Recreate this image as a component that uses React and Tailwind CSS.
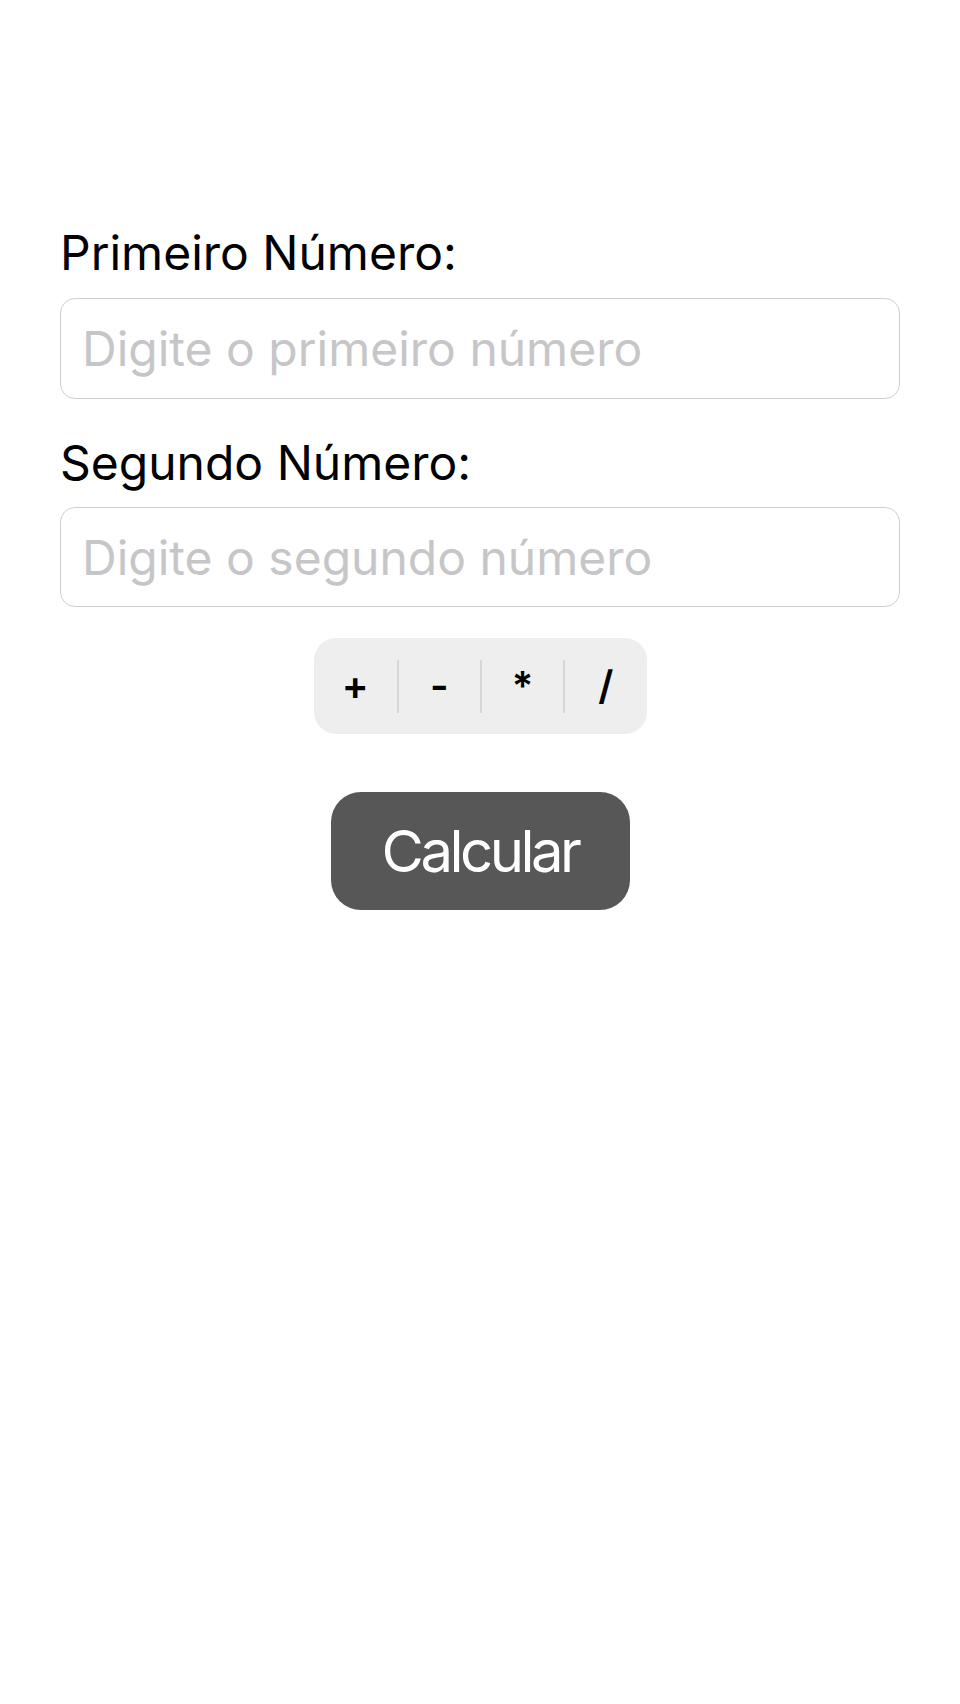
import { useState } from "react";

const ops = ["+", "-", "*", "/"];

const App = () => {
  const [first, setFirst] = useState("");
  const [second, setSecond] = useState("");
  const [op, setOp] = useState(null);
  const [result, setResult] = useState(null);

  const handleCalc = () => {
    const a = parseFloat(first);
    const b = parseFloat(second);
    if (isNaN(a) || isNaN(b) || !op) return;
    if (op === "+") setResult(a + b);
    else if (op === "-") setResult(a - b);
    else if (op === "*") setResult(a * b);
    else setResult(a / b);
  };

  return (
    <div
      className="min-h-[1704px] w-full bg-white px-[60px] pt-[224px]"
      style={{ fontFamily: "Inter, 'Liberation Sans', sans-serif" }}
    >
      <label className="block text-[48px] leading-[58px] text-black">
        Primeiro Número:
      </label>
      <input
        className="mt-[16px] block h-[101px] w-full rounded-[15px] border border-[#cfcfcf] px-[21px] text-[48px] text-black outline-none placeholder:text-[#c6c6c8]"
        type="number"
        placeholder="Digite o primeiro número"
        value={first}
        onChange={(e) => setFirst(e.target.value)}
      />

      <label className="mt-[35px] block text-[48px] leading-[58px] text-black">
        Segundo Número:
      </label>
      <input
        className="mt-[15px] block h-[100px] w-full rounded-[15px] border border-[#cfcfcf] px-[21px] text-[48px] text-black outline-none placeholder:text-[#c6c6c8]"
        type="number"
        placeholder="Digite o segundo número"
        value={second}
        onChange={(e) => setSecond(e.target.value)}
      />

      <div className="mx-auto mt-[31px] flex h-[96px] w-[333px] items-center rounded-[22px] bg-[#eeeeef]">
        {ops.map((o, i) => (
          <div key={o} className="flex h-full flex-1 items-center">
            {i > 0 && <div className="h-[53px] w-[2px] bg-[#d7d7d9]" />}
            <button
              className={
                "flex h-full flex-1 items-center justify-center text-[40px] font-semibold text-black " +
                (op === o ? "rounded-[18px] bg-white" : "")
              }
              onClick={() => setOp(o)}
            >
              {o}
            </button>
          </div>
        ))}
      </div>

      <button
        className="mx-auto mt-[58px] flex h-[118px] w-[299px] items-center justify-center rounded-[30px] bg-[#575757] text-[58px] tracking-[-3.5px] text-white"
        onClick={handleCalc}
      >
        Calcular
      </button>

      {result !== null && (
        <div className="mt-8 text-center text-[48px] text-black">{result}</div>
      )}
    </div>
  );
};

export default App;
